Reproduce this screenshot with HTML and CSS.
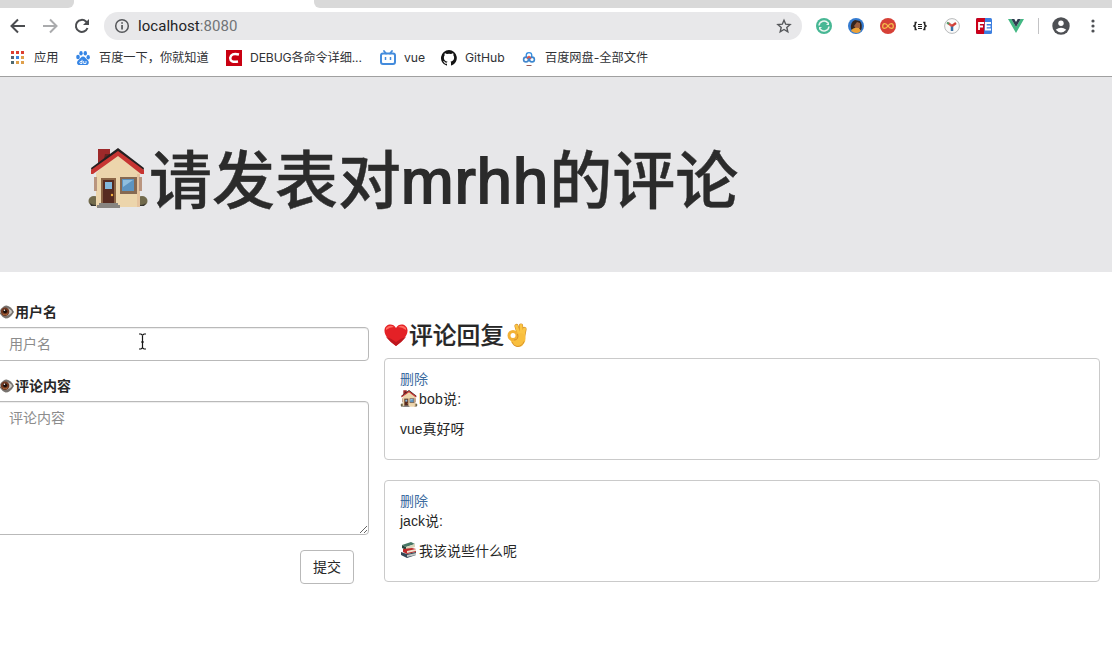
FILE: index.html
```html
<!DOCTYPE html>
<html lang="zh-CN">
<head>
<meta charset="utf-8">
<title>localhost:8080</title>
<link rel="stylesheet" href="styles.css">
</head>
<body>
<svg class="sprite" aria-hidden="true">
  <symbol id="house" viewBox="0 0 60 60">
    <ellipse cx="6" cy="53" rx="5.5" ry="5" fill="#716a4c"/><ellipse cx="54" cy="53" rx="5.5" ry="5" fill="#716a4c"/>
    <path d="M2 55q5 4 10 0v3H3zM48 55q5 4 10 0l-2 3h-8z" fill="#37352f"/>
    <path d="M8 25 30 4l22 21v34H8z" fill="#ecd5ac"/>
    <path d="M49 26h3v33h-3z" fill="#e5c39e"/>
    <path d="M6 29h3v14H6zM51 29h3v14h-3z" fill="#b9957f"/>
    <path d="M10 1h12v7L10 17z" fill="#9d292a"/><path d="M17 6h5v4l-7 5z" fill="#642320"/>
    <path d="M30 0 56 20l-1 4L30 5 4 24l-1-4z" fill="#242021"/>
    <path d="M30 3 56 22v4h-3L30 8 5 26H3v-4z" fill="#c73532"/>
    <path d="M13 30h15v26H13z" fill="#8b6546"/><path d="M15 32h11v24H15z" fill="#572b21"/>
    <path d="M17 34h7v7h-7z" fill="#83b7dc"/><circle cx="24" cy="47" r="1.2" fill="#f5b342"/>
    <path d="M32 29h17v17H32z" fill="#866952"/><path d="M34 31h12v12H34z" fill="#5d94c1"/><path d="M35 32h10l-10 7z" fill="#8fbede"/>
    <path d="M11 55h19v2h2v3H9v-3h2z" fill="#888581"/>
  </symbol>
  <symbol id="eye" viewBox="0 0 16 14">
    <path d="M0 7Q4 0 8 0q5 1 8 7Q12 14 7 14 3 13 0 7z" fill="#78736f"/>
    <path d="M1 7q3-4 7-4 4 0 6 4-3 4-7 4-4-1-6-4z" fill="#d0ccc6"/>
    <circle cx="6.500" cy="6.800" r="4.500" fill="#703821"/><path d="M3.500 8q3 3 6 0l-1 2h-4z" fill="#bc743d"/>
    <circle cx="6.500" cy="6.300" r="2.100" fill="#170e0b"/><circle cx="5.800" cy="5" r=".8" fill="#fff"/>
  </symbol>
</svg>

<header class="browser">
  <div class="tabs"><i class="tab-left"></i><i class="tab-right"></i></div>
  <div class="toolbar">
    <svg class="nav" viewBox="0 0 16 16" fill="none" stroke="#4b4d50" stroke-width="2"><path d="M15 8H2M8 1.500 1.500 8 8 14.500"/></svg>
    <svg class="nav" viewBox="0 0 16 16" fill="none" stroke="#aaabad" stroke-width="2"><path d="M1 8h13M8 1.500 14.500 8 8 14.500"/></svg>
    <svg class="nav" viewBox="0 0 16 16"><path d="M13.500 10A6 6 0 1 1 12 3.500L13.500 5" fill="none" stroke="#4b4d50" stroke-width="2"/><path d="M15 1v6H9z" fill="#4b4d50"/></svg>
    <div class="address">
      <svg width="16" height="16" viewBox="0 0 16 16"><circle cx="8" cy="8" r="6.300" fill="none" stroke="#55575a" stroke-width="1.500"/><path d="M7.200 7h1.700v4.500H7.200zM7.200 4.200h1.700v1.600H7.200z" fill="#55575a"/></svg>
      <span class="url">localhost<span class="port">:8080</span></span>
      <svg class="star" width="16" height="16" viewBox="0 0 16 16"><path d="m8 2.200 1.700 4 4.400.4-3.300 2.900 1 4.300L8 11.500l-3.800 2.300 1-4.300-3.300-2.900 4.400-.4z" fill="none" stroke="#55575a" stroke-width="1.400"/></svg>
    </div>
    <div class="extensions">
      <svg viewBox="0 0 16 16"><circle cx="8" cy="8" r="8" fill="#47b794"/><path d="M3 7.500A5 5 0 0 1 12 5M13 8.500A5 5 0 0 1 4 11" fill="none" stroke="#e9f5ef" stroke-width="1.500"/><path d="M13 4v3h-3zM3 12V9h3z" fill="#e9f5ef"/></svg>
      <svg viewBox="0 0 16 16"><circle cx="8" cy="8" r="8" fill="#347bd0"/><path d="M3 11Q2 4 7 2l5 1q3 4 1 9H4z" fill="#35251f"/><path d="m9 4 3 1v5l-4 1-2-3z" fill="#9c5e3d"/><path d="M3 13q2-4 8-3l2 3q-4 4-10 0z" fill="#eda237"/></svg>
      <svg viewBox="0 0 16 16"><circle cx="8" cy="8" r="8" fill="#d64037"/><path d="M8 8C6 5 3 4.500 2.700 8S6 11 8 8s5-3.500 5.300 0S10 11 8 8z" fill="none" stroke="#f4bd4b" stroke-width="1.300"/></svg>
      <svg viewBox="0 0 16 16" fill="none" stroke="#252525"><path d="M4.800 4.500H3.300v2.300L2 8l1.300 1.200v2.300h1.500M11.200 4.500h1.500v2.300L14 8l-1.300 1.200v2.300h-1.500" stroke-width="1.500"/><path d="M6 6.500h4M6 8.500h4M6 10.500h4"/></svg>
      <svg viewBox="0 0 16 16"><circle cx="8" cy="8" r="7.400" fill="#fafafa" stroke="#b8babb"/><path d="M8 8v5" stroke="#3971a5" stroke-width="2.500"/><path d="M8 8 4 5" stroke="#d9534c" stroke-width="2.300"/><path d="m8 8 4-3" stroke="#d23e35" stroke-width="2.300"/><path d="M3 4.500 5 6" stroke="#4d9b66" stroke-width="2"/></svg>
      <svg viewBox="0 0 16 16"><rect width="16" height="16" rx="1.500" fill="#3d7fe0"/><path d="M1.500 0H9L8 16H1.500Q0 16 0 14.500v-13Q0 0 1.500 0z" fill="#cb0019"/><path d="M3 12V5h5M3 8.500h4M15 5H9.800v6.500H15M9.800 8.300h4.700" fill="none" stroke="#fff" stroke-width="1.800"/></svg>
      <svg viewBox="0 0 16 16"><path d="M0 1h3.300L8 9.100 12.700 1H16L8 15z" fill="#42b883"/><path d="M3.300 1h3L8 4l1.700-3h3L8 9.100z" fill="#2e3c50"/></svg>
    </div>
    <i class="divider"></i>
    <svg class="avatar" viewBox="0 0 18 18"><circle cx="9" cy="9" r="8.700" fill="#4e5054"/><circle cx="9" cy="6.300" r="2.700" fill="#fff"/><path d="M3.700 12.700q5.300-4 10.600 0-5.300 5.500-10.600 0z" fill="#fff"/></svg>
    <svg class="dots" viewBox="0 0 4 14" fill="#4e5054"><circle cx="2" cy="2" r="1.600"/><circle cx="2" cy="7" r="1.600"/><circle cx="2" cy="12" r="1.600"/></svg>
  </div>
  <nav class="bookmarks">
    <span class="bookmark apps"><svg viewBox="0 0 16 16"><path d="M2 1h3v3H2zM7 1h3v3H7zM12 1h3v3h-3z" fill="#dd3f31"/><path d="M2 6h3v3H2z" fill="#566472"/><path d="M7 6h3v3H7z" fill="#3d83dc"/><path d="M12 6h3v3h-3z" fill="#dfa04b"/><path d="M2 11h3v3H2z" fill="#4c6971"/><path d="M7 11h3v3H7zM12 11h3v3h-3z" fill="#dfa04b"/></svg>应用</span>
    <span class="bookmark"><svg viewBox="0 0 16 16" fill="#3585e5"><ellipse cx="3" cy="7" rx="1.800" ry="2.300"/><ellipse cx="6" cy="3.300" rx="1.700" ry="2.300"/><ellipse cx="10.300" cy="3.300" rx="1.700" ry="2.300"/><ellipse cx="13.200" cy="7.200" rx="1.700" ry="2.200"/><path d="M8 6.500c2 0 2.500 2 4.500 3.500 2.500 2 1 5.500-1.500 5H5c-3 .5-4-3-1.500-5C5.500 8.500 6 6.500 8 6.500z"/><path d="M7 9.800v3.700H5.300q-1-1 0-2H7M8.700 11v2.500H11V11" stroke="#fff" stroke-width=".9" fill="none"/></svg>百度一下，你就知道</span>
    <span class="bookmark"><svg viewBox="0 0 16 16"><path d="M0 0h16v16H0z" fill="#c90011"/><path d="M13 4.500Q5 2.500 4.200 8q0 5 7.800 3.500" fill="none" stroke="#fff" stroke-width="2.500"/></svg><span class="debug">DEBUG各命令详细...</span></span>
    <span class="bookmark"><svg viewBox="0 0 16 16"><path d="m4 1 2 2.500M12 1l-2 2.500" stroke="#438bdc" stroke-width="1.800" stroke-linecap="round"/><rect x="1" y="3.500" width="14" height="10.500" rx="2" fill="none" stroke="#438bdc" stroke-width="2"/><path d="M5.500 7v3M10.500 7v3" stroke="#438bdc" stroke-width="1.500"/></svg>vue</span>
    <span class="bookmark"><svg viewBox="0 0 16 16"><path d="M8 0a8 8 0 0 0-2.500 15.600c.4.100.5-.2.500-.4v-1.500c-2.200.5-2.700-1-2.700-1-.4-.9-.9-1.200-.9-1.200-.7-.5.100-.5.100-.5.800.1 1.200.8 1.200.8.700 1.200 1.900.9 2.300.7.100-.5.300-.9.500-1.100-1.800-.2-3.600-.9-3.600-4 0-.9.300-1.600.8-2.100-.1-.2-.4-1 .1-2.100 0 0 .7-.2 2.200.8a7.500 7.500 0 0 1 4 0c1.500-1 2.200-.8 2.200-.8.400 1.100.2 1.900.1 2.100.5.600.8 1.300.8 2.100 0 3.100-1.900 3.800-3.600 4 .3.300.5.700.5 1.500v2.200c0 .2.100.5.600.4A8 8 0 0 0 8 0z" fill="#141414"/></svg>GitHub</span>
    <span class="bookmark"><svg viewBox="0 0 16 16" fill="none"><circle cx="8" cy="5.500" r="2.800" stroke="#328ce0" stroke-width="1.300"/><circle cx="5" cy="9.500" r="2.400" stroke="#4386cc" stroke-width="1.600"/><circle cx="11" cy="9.500" r="2.400" stroke="#3a86cf" stroke-width="1.600"/><path d="m6 8.500 2-2 2 2" stroke="#e25246" stroke-width="1.500"/><path d="M5.500 15.500h5" stroke="#995d59"/></svg>百度网盘-全部文件</span>
  </nav>
</header>

<section class="jumbotron">
  <h1><svg class="title-house"><use href="#house"/></svg><span class="title">请发表对<span class="name">mrhh</span>的评论</span></h1>
</section>

<main class="content">
  <form class="comment-form">
    <label for="user"><svg class="eye"><use href="#eye"/></svg>用户名</label>
    <input id="user" class="field" type="text" placeholder="用户名">
    <label for="comment"><svg class="eye"><use href="#eye"/></svg>评论内容</label>
    <textarea id="comment" class="field area" placeholder="评论内容"></textarea>
    <button type="button">提交</button>
  </form>
  <section class="replies">
    <h2>
      <svg class="heart" viewBox="0 0 24 24"><path d="M12 23C6 18 0 13 .5 7 1 1 9-.5 12 5c3-5.500 11-4 11.500 2C24 13 18 18 12 23z" fill="#e42126"/><path d="M2 5q4-4 8-1-4 0-8 3zM14 4q4-3 8 1v2q-4-3-8-3z" fill="#ff6b60"/><path d="M2 14q5 1 10 5 5-4 10-5-5 6-10 9-5-3-10-9z" fill="#be171e"/></svg>评论回复<svg class="hand" viewBox="0 0 20 25"><g fill="none" stroke-linecap="round"><path d="M12.500 13 9.500 3M14.500 13l-.5-10.500M16 14l1.500-8" stroke="#d18b27" stroke-width="4.200"/><path d="M12.500 13 9.500 3M14.500 13l-.5-10.500M16 14l1.500-8" stroke="#fbc544" stroke-width="3"/></g><path d="M10 11q5-2 8 1 2 6-3 11-4 2-7 0-4-3-5-7z" fill="#f9bf3e"/><circle cx="6" cy="12.500" r="4" fill="#fff" stroke="#f3b236" stroke-width="3"/><path d="M7 17q5 0 3.500-6M5 19q1 4 5 4.500 5 0 7-5" fill="none" stroke="#cf8828" stroke-width=".8"/></svg>
    </h2>
    <article class="card">
      <a>删除</a>
      <div class="line"><svg class="small-house"><use href="#house"/></svg><span class="author">bob说:</span></div>
      <p class="line">vue真好呀</p>
    </article>
    <article class="card">
      <a>删除</a>
      <div class="line">jack说:</div>
      <p class="line"><svg class="books" viewBox="0 0 18 16"><path d="m2 3 9-3 4 2-9 3z" fill="#477765"/><path d="m2 3 4 2v3L2 6z" fill="#28473f"/><path d="m6 5 9-3v3L6 8z" fill="#d9d6bb"/><path d="m3 7 9-1 4 1v3l-9 2-4-2z" fill="#bd2929"/><path d="m7 9 9-2v2l-9 2z" fill="#eee0ce"/><path d="m1 10 6 2 9-2v3l-9 3-6-3z" fill="#354755"/><path d="m7 13 9-2v2l-9 2z" fill="#c1c7c6"/></svg>我该说些什么呢</p>
    </article>
  </section>
</main>
<svg class="cursor" viewBox="0 0 9 17"><path d="M1 1h2l1.500 1.200L6 1h2M4.500 2v13M1 16h2l1.500-1.200L6 16h2M3 9h3" fill="none" stroke="#151515" stroke-width="1.200"/></svg>
</body>
</html>
```

FILE: styles.css
```css
* { box-sizing: border-box; }
body {
  margin: 0;
  height: 649px;
  overflow: hidden;
  background: #fff;
  color: #272727;
  font: 14px/20px "Liberation Sans", "Noto Sans CJK SC", sans-serif;
}
.sprite { position: absolute; width: 0; height: 0; }
svg { flex: none; }

.browser { height: 77px; border-bottom: 1px solid #a0a0a0; }
.tabs { display: flex; justify-content: space-between; height: 8px; }
.tab-left { width: 74px; background: #d9d9d9; border-bottom-right-radius: 6px; }
.tab-right { width: 798px; background: #d9d9d9; border-bottom-left-radius: 6px; }
.toolbar { display: flex; align-items: center; height: 36px; padding-left: 10px; }
.nav { width: 16px; height: 16px; margin-right: 16px; }
.address {
  display: flex;
  align-items: center;
  width: 698px;
  height: 28px;
  margin-left: -2px;
  padding: 0 10px;
  border-radius: 14px;
  background: #e8e8ea;
}
.url { margin-left: 8px; font: 15px/20px Roboto, sans-serif; letter-spacing: 0.05px; color: #222326; }
.port { color: #727477; }
.star { margin-left: auto; }
.extensions { display: flex; gap: 16px; margin-left: 14px; }
.extensions svg { width: 16px; height: 16px; }
.divider { width: 1px; height: 16px; margin-left: 14px; background: #c3c3c5; }
.avatar { width: 18px; height: 18px; margin-left: 13px; }
.dots { width: 4px; height: 14px; margin-left: 21px; }
.bookmarks {
  display: grid;
  grid-template-columns: 66px 151px 154px 61px 80px 1fr;
  height: 28px;
  padding-left: 9px;
  font: 12.2px/28px Inter, "Noto Sans CJK SC", sans-serif;
  color: #303236;
}
.bookmark { display: flex; align-items: center; gap: 8px; white-space: nowrap; }
.bookmark svg { width: 16px; height: 16px; }
.apps { gap: 9px; }
.debug { letter-spacing: -0.15px; }

.jumbotron { height: 195px; padding: 60px 0 0 88px; background: #e7e7e9; }
h1 {
  display: flex;
  align-items: center;
  height: 84px;
  margin: 0;
  font-size: 63px;
  font-weight: 500;
  line-height: 84px;
  white-space: nowrap;
  color: #2b2b2b;
}
.title-house { width: 60px; height: 60px; margin: 0 1px 3px 0; }
.title { padding-top: 4px; -webkit-text-stroke: 0.4px #2b2b2b; }
.name { font-weight: 400; letter-spacing: 1.2px; -webkit-text-stroke: 2px #2b2b2b; }

.content { display: flex; height: 377px; }
.comment-form { display: flex; flex-direction: column; width: 373px; margin-left: -4px; padding-top: 30px; }
label { display: flex; align-items: center; height: 20px; margin-bottom: 5px; padding-left: 3px; font-weight: 700; }
.eye { width: 15px; height: 14px; margin-right: 1px; }
.field {
  display: block;
  width: 373px;
  height: 34px;
  margin: 0 0 15px;
  padding: 6px 12px;
  border: 1px solid #b9b9b9;
  border-radius: 4px;
  background: #fff;
  box-shadow: inset 0 1px 1px #00000013;
  font: inherit;
}
.field::placeholder { color: #8c8c8c; opacity: 1; }
.area { height: 134px; resize: vertical; }
button {
  width: 54px;
  height: 34px;
  margin-left: 304px;
  padding: 0;
  border: 1px solid #b9b9b9;
  border-radius: 4px;
  background: #fff;
  color: #272727;
  font: inherit;
}
.replies { width: 716px; margin-left: 15px; padding-top: 47px; }
h2 {
  display: flex;
  align-items: center;
  height: 34px;
  margin: 0 0 5px;
  font-size: 23.8px;
  font-weight: 500;
  line-height: 34px;
  -webkit-text-stroke: 0.2px #272727;
}
.heart, .hand { -webkit-text-stroke: 0; }
.heart { width: 24px; height: 24px; margin: 0 1px 2px 0; }
.hand { width: 20px; height: 25px; margin: 0 0 2px 3px; }
.card { height: 102px; margin-bottom: 20px; padding: 10px 15px; border: 1px solid #cacaca; border-radius: 4px; }
.card a { display: block; color: #3c6b9f; }
.line { display: flex; align-items: center; height: 20px; margin: 0; }
p.line { margin-top: 10px; }
.small-house { width: 18px; height: 17px; margin: 0 1px 2px 0; }
.author { letter-spacing: 0.2px; }
.books { width: 18px; height: 16px; margin: 0 1px 2px 0; }
.cursor { position: absolute; left: 138px; top: 333px; width: 9px; height: 17px; }
```
